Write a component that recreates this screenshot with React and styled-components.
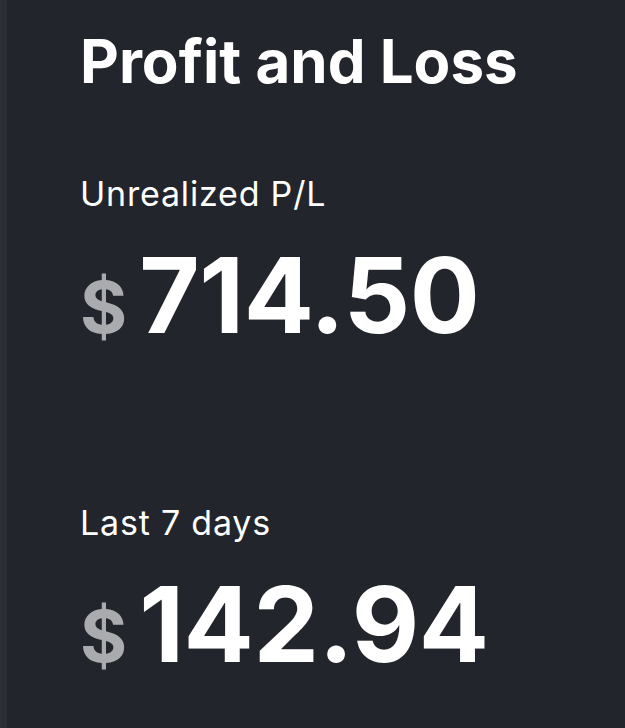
import React from "react";
import styled, { createGlobalStyle } from "styled-components";

const Global = createGlobalStyle`
  html, body { margin: 0; padding: 0; background: #22252b; }
  body { font-family: Inter, "Noto Sans", sans-serif; -webkit-font-smoothing: antialiased; }
`;

const Page = styled.div`
  display: flex;
  min-height: 728px;
  background: #22252b;
`;

const Strip = styled.div`
  width: 7px;
  flex: none;
  background: #2b2e35;
`;

const Panel = styled.main`
  flex: 1;
  padding: 25px 0 0 73px;
  display: flex;
  flex-direction: column;
`;

const Title = styled.h1`
  margin: 0;
  font-size: 60px;
  font-weight: 700;
  line-height: 72px;
  color: #ffffff;
`;

const Section = styled.section`
  display: flex;
  flex-direction: column;
  margin-top: ${(p) => p.$top}px;
`;

const Label = styled.div`
  font-size: 34px;
  font-weight: 400;
  line-height: 42px;
  letter-spacing: 0.8px;
  color: #ffffff;
`;

const ValueRow = styled.div`
  display: flex;
  align-items: baseline;
  gap: 12px;
  margin-top: 28px;
`;

const Currency = styled.span`
  font-size: 72px;
  line-height: 72px;
  font-weight: 700;
  color: #a9abaf;
`;

const Amount = styled.span`
  font-size: 104px;
  line-height: 104px;
  font-weight: 700;
  letter-spacing: -0.4px;
  color: #ffffff;
`;

function Metric({ label, value, top }) {
  return (
    <Section $top={top}>
      <Label>{label}</Label>
      <ValueRow>
        <Currency>$</Currency>
        <Amount>{value}</Amount>
      </ValueRow>
    </Section>
  );
}

export default function App() {
  return (
    <>
      <Global />
      <Page>
        <Strip />
        <Panel>
          <Title>Profit and Loss</Title>
          <Metric label="Unrealized P/L" value="714.50" top={76} />
          <Metric label="Last 7 days" value="142.94" top={155} />
        </Panel>
      </Page>
    </>
  );
}
